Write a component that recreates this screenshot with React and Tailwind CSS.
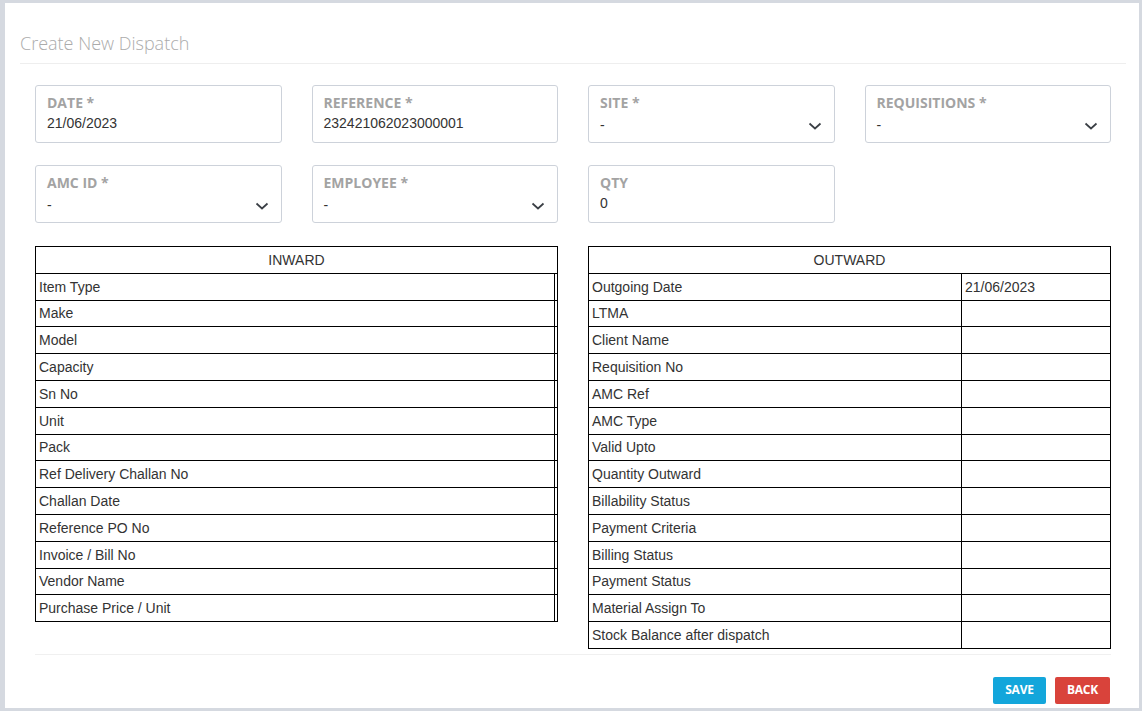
import React from "react";

const fieldRows = [
  [
    { label: "DATE *", value: "21/06/2023" },
    { label: "REFERENCE *", value: "232421062023000001" },
    { label: "SITE *", value: "-", select: true },
    { label: "REQUISITIONS *", value: "-", select: true },
  ],
  [
    { label: "AMC ID *", value: "-", select: true },
    { label: "EMPLOYEE *", value: "-", select: true },
    { label: "QTY", value: "0" },
  ],
];

const inwardRows = [
  "Item Type",
  "Make",
  "Model",
  "Capacity",
  "Sn No",
  "Unit",
  "Pack",
  "Ref Delivery Challan No",
  "Challan Date",
  "Reference PO No",
  "Invoice / Bill No",
  "Vendor Name",
  "Purchase Price / Unit",
];

const outwardRows = [
  ["Outgoing Date", "21/06/2023"],
  ["LTMA", ""],
  ["Client Name", ""],
  ["Requisition No", ""],
  ["AMC Ref", ""],
  ["AMC Type", ""],
  ["Valid Upto", ""],
  ["Quantity Outward", ""],
  ["Billability Status", ""],
  ["Payment Criteria", ""],
  ["Billing Status", ""],
  ["Payment Status", ""],
  ["Material Assign To", ""],
  ["Stock Balance after dispatch", ""],
];

const Chevron = () => (
  <svg width="14" height="8" viewBox="0 0 14 8" className="mt-[1px] shrink-0">
    <polyline
      points="1.5,1.5 7,6.5 12.5,1.5"
      fill="none"
      stroke="#3a3f45"
      strokeWidth="1.7"
    />
  </svg>
);

const Field = ({ label, value, select }) => (
  <div className="h-[58px] border border-[#cdd2da] rounded-[3px] bg-white pt-[7px] pl-[11px] pr-[12px]">
    <div className="font-['Open_Sans',sans-serif] font-bold text-[14px] leading-[20px] text-[#a3a3a3]">
      {label}
    </div>
    <div
      className={
        select
          ? "mt-[2px] flex items-center justify-between font-['Liberation_Sans',Arial,sans-serif] text-[14px] leading-[20px] text-[#333]"
          : "flex items-center justify-between font-['Liberation_Sans',Arial,sans-serif] text-[14px] leading-[20px] text-[#333]"
      }
    >
      <span>{value}</span>
      {select && <Chevron />}
    </div>
  </div>
);

const App = () => {
  return (
    <div className="min-h-screen bg-[#d5d9e0] pt-[3px] pl-[5px] pr-[3px] pb-[3px]">
      <div className="bg-white pb-[4px]">
        <div className="ml-[15px] mr-[13px] pt-[30px] pb-[10px] border-b border-[#eeeeee]">
          <h1 className="font-['Open_Sans',sans-serif] font-light text-[18px] leading-[20px] text-[#ababab]">
            Create New Dispatch
          </h1>
        </div>

        <div className="pl-[30px] pr-[28px] pt-[21px]">
          <div className="flex flex-col gap-[22px]">
            {fieldRows.map((row, i) => (
              <div key={i} className="grid grid-cols-4 gap-[30px]">
                {row.map((f) => (
                  <Field key={f.label} {...f} />
                ))}
              </div>
            ))}
          </div>

          <div className="grid grid-cols-2 gap-[30px] items-start mt-[23px] font-['Liberation_Sans',Arial,sans-serif] text-[14px] leading-[20px] text-[#333]">
            <div className="border-x border-t border-black">
              <div className="h-[26.8px] border-b border-black flex items-center justify-center">
                INWARD
              </div>
              {inwardRows.map((r) => (
                <div key={r} className="h-[26.8px] border-b border-black flex">
                  <div className="flex-1 flex items-center px-[3px]">{r}</div>
                  <div className="w-[3px] border-l border-black" />
                </div>
              ))}
            </div>

            <div className="border-x border-t border-black">
              <div className="h-[26.8px] border-b border-black flex items-center justify-center">
                OUTWARD
              </div>
              {outwardRows.map(([k, v]) => (
                <div key={k} className="h-[26.8px] border-b border-black flex">
                  <div className="flex-1 flex items-center px-[3px]">{k}</div>
                  <div className="w-[149px] border-l border-black flex items-center px-[3px]">
                    {v}
                  </div>
                </div>
              ))}
            </div>
          </div>

          <div className="mt-[5px] border-t border-[#f0f0f0]" />

          <div className="flex justify-end gap-[9px] mt-[22px] pr-[1px]">
            <button className="h-[27px] w-[53px] rounded-[2px] bg-[#13a6db] text-white font-['Open_Sans',sans-serif] font-bold text-[12px] tracking-[-0.2px]">
              SAVE
            </button>
            <button className="h-[27px] w-[55px] rounded-[2px] bg-[#d9433b] text-white font-['Open_Sans',sans-serif] font-bold text-[12px] tracking-[-0.2px]">
              BACK
            </button>
          </div>
        </div>
      </div>
    </div>
  );
};

export default App;
